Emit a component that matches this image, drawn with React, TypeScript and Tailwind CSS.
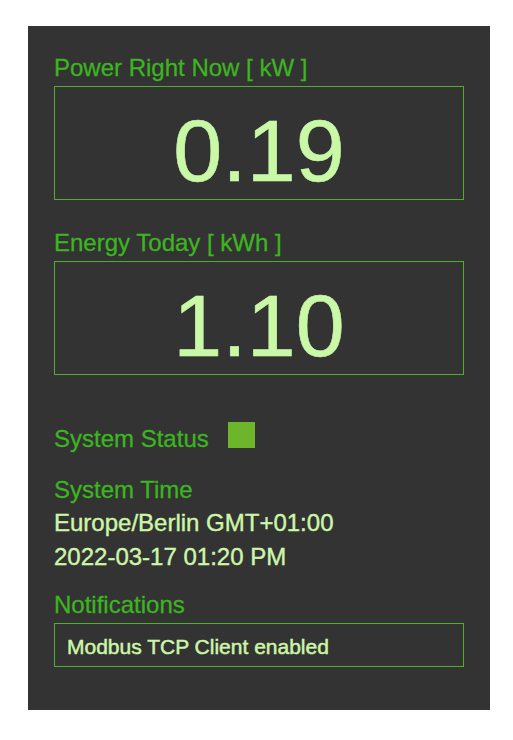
import React from 'react';

/** A green caption above a value. */
const Label: React.FC<{ children: React.ReactNode; className?: string }> = ({ children, className = '' }) => (
    <div className={`text-[24px] leading-[28px] text-[#3cb520] [-webkit-text-stroke:0.3px] ${className}`}>{children}</div>
);

/** A framed big number. */
const BigValue: React.FC<{ value: string }> = ({ value }) => (
    <div className="mt-1 h-[114px] border border-[#4cb02a] pt-[20px] text-center text-[88px] leading-[88px] text-[#c9f9a7] [-webkit-text-stroke:0.6px]">
        {value}
    </div>
);

const App: React.FC = () => {
    return (
        <div className="min-h-[740px] bg-white pl-[28px] pt-[26px]" style={{ fontFamily: '"Liberation Sans", Arial, Helvetica, sans-serif' }}>
            <div className="flex h-[684px] w-[462px] flex-col bg-[#333333] px-[26px] pt-[28px]">
                <Label>Power Right Now [ kW ]</Label>
                <BigValue value="0.19" />

                <Label className="mt-[29px]">Energy Today [ kWh ]</Label>
                <BigValue value="1.10" />

                <div className="mt-[47px] flex items-end">
                    <Label>System Status</Label>
                    <span className="mb-[5px] ml-[19px] h-[26px] w-[27px] bg-[#6db52b]" />
                </div>

                <Label className="mt-[23px]">System Time</Label>
                <div className="text-[24px] leading-[34px] text-[#cdf6a8] [-webkit-text-stroke:0.4px]">
                    <div className="mt-[2px]">Europe/Berlin GMT+01:00</div>
                    <div>2022-03-17 01:20 PM</div>
                </div>

                <Label className="mt-[17px]">Notifications</Label>
                <div className="mt-1 h-[44px] border border-[#4cb02a] pl-[12px] pt-[11px] text-[21px] leading-[24px] text-[#cdf6a8] [-webkit-text-stroke:0.5px]">
                    Modbus TCP Client enabled
                </div>
            </div>
        </div>
    );
};

export default App;
